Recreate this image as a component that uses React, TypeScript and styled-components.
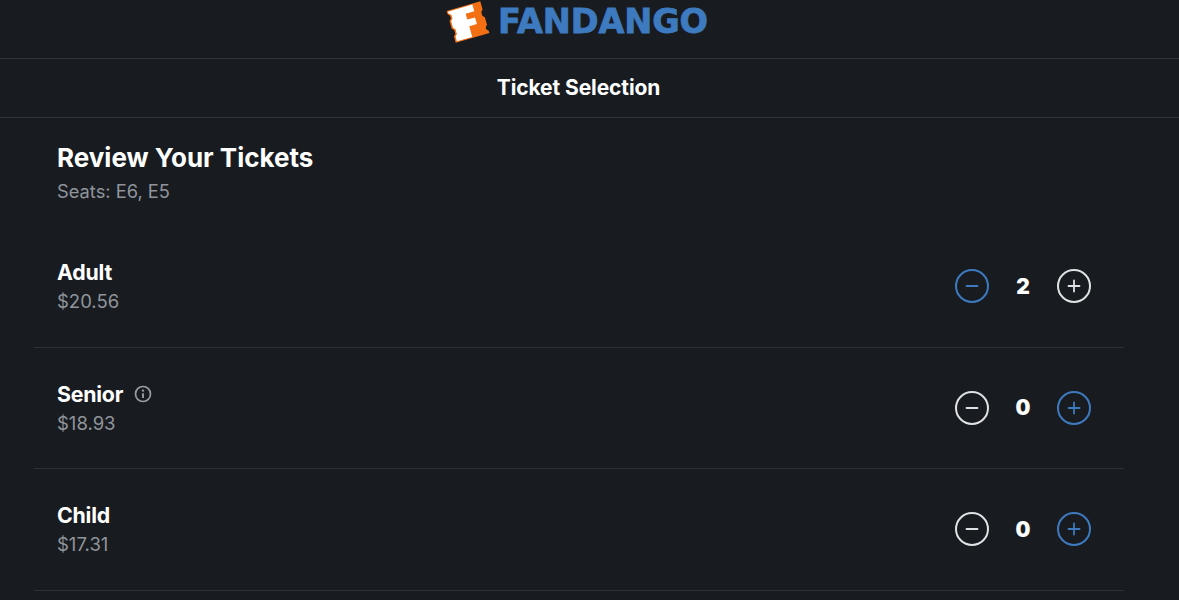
import React from "react";
import styled, { createGlobalStyle } from "styled-components";

const BLUE = "#3d7abf";
const LIGHT = "#dfe1e4";
const MUTED = "#90949a";
const FONT = `Inter, "Noto Sans", "Liberation Sans", sans-serif`;

const Global = createGlobalStyle`
  html, body { margin: 0; padding: 0; background: #181c21; height: 600px; overflow: hidden; }
  * { box-sizing: border-box; }
`;

const Page = styled.div`
  width: 1179px;
  height: 600px;
  overflow: hidden;
  background: #181c21;
  color: #fff;
  font-family: ${FONT};
`;

const LogoBar = styled.header`
  height: 59px;
  border-bottom: 1px solid #31353b;
  display: flex;
  align-items: flex-start;
  justify-content: center;
  gap: 7px;
  padding-right: 26px;
`;

const Wordmark = styled.span`
  font-family: "DejaVu Sans", "Liberation Sans", sans-serif;
  font-weight: 700;
  font-size: 33.5px;
  line-height: 44px;
  letter-spacing: -0.1px;
  color: ${BLUE};
  -webkit-text-stroke: 0.8px ${BLUE};
`;

const TitleBar = styled.div`
  height: 59px;
  border-bottom: 1px solid #31353b;
  display: flex;
  align-items: center;
  justify-content: center;
  padding: 0 22px 2px 0;
  font-size: 21px;
  font-weight: 700;
  letter-spacing: -0.1px;
`;

const Content = styled.main`
  padding: 0 55px 0 34px;
`;

const Intro = styled.section`
  padding: 23px 0 0 23px;
  height: 108px;
`;

const Heading = styled.h1`
  margin: 0;
  font-size: 26px;
  font-weight: 700;
  line-height: 34px;
`;

const Seats = styled.p`
  margin: 0;
  font-size: 18.3px;
  line-height: 32px;
  color: ${MUTED};
`;

const Row = styled.div`
  height: 121.5px;
  border-bottom: 1px solid #2e3238;
  display: flex;
  align-items: center;
  justify-content: space-between;
  padding: 0 33px 0 23px;
`;

const Info = styled.div`
  display: flex;
  flex-direction: column;
  gap: 3px;
  padding-top: 1px;
`;

const NameLine = styled.div`
  display: flex;
  align-items: center;
  gap: 11px;
  font-size: 21.3px;
  font-weight: 700;
  line-height: 26px;
  letter-spacing: -0.2px;
`;

const Price = styled.div`
  font-size: 18.5px;
  line-height: 26px;
  color: ${MUTED};
`;

const Stepper = styled.div`
  display: flex;
  align-items: center;
`;

const RoundButton = styled.button<{ $active: boolean }>`
  width: 34px;
  height: 34px;
  padding: 0;
  border: 2.3px solid ${(p) => (p.$active ? BLUE : LIGHT)};
  border-radius: 50%;
  background: transparent;
  color: ${(p) => (p.$active ? BLUE : LIGHT)};
  display: flex;
  align-items: center;
  justify-content: center;
`;

const Count = styled.span`
  width: 68px;
  text-align: center;
  font-size: 21px;
  font-weight: 900;
`;

const Logo = () => (
  <svg width="46" height="46" viewBox="0 0 46 46" aria-hidden="true">
    <g transform="rotate(-16 23 22)">
      <path
        d="M5.500 5.500 H40.500 V14 L38.500 16 V20 L40.500 22 V30 L38.500 32 V34 L40.500 36 V38.500 H5.500 V32 L7.500 30 V26 L5.500 24 V16 L7.500 14 V11 L5.500 9 Z"
        fill="#f26f14"
      />
      <path
        d="M6.500 6.500 H32 V13.500 H23 V19.500 H31 V26.500 H23 V37.500 H7 V32.500 L9 30.500 V25.500 L7 23.500 V16.500 L9 14.500 V10.500 L6.500 8.500 Z"
        fill="#fff"
      />
    </g>
  </svg>
);

const Minus = () => (
  <svg width="16" height="16" viewBox="0 0 16 16" aria-hidden="true">
    <path d="M2.500 8 H13.500" stroke="currentColor" strokeWidth="1.800" strokeLinecap="round" />
  </svg>
);

const Plus = () => (
  <svg width="16" height="16" viewBox="0 0 16 16" aria-hidden="true">
    <path d="M2.500 8 H13.500 M8 2.500 V13.500" stroke="currentColor" strokeWidth="1.800" strokeLinecap="round" />
  </svg>
);

const InfoIcon = () => (
  <svg width="18" height="18" viewBox="0 0 18 18" aria-hidden="true">
    <circle cx="9" cy="9" r="7.500" fill="none" stroke="#9a9da2" strokeWidth="1.700" />
    <circle cx="9" cy="5.600" r="1.200" fill="#9a9da2" />
    <path d="M9 8.200 V13" stroke="#9a9da2" strokeWidth="1.900" />
  </svg>
);

const tickets = [
  { name: "Adult", price: "$20.56", count: 2, info: false },
  { name: "Senior", price: "$18.93", count: 0, info: true },
  { name: "Child", price: "$17.31", count: 0, info: false },
];

export default function App() {
  return (
    <Page>
      <Global />
      <LogoBar>
        <Logo />
        <Wordmark>FANDANGO</Wordmark>
      </LogoBar>
      <TitleBar>Ticket Selection</TitleBar>
      <Content>
        <Intro>
          <Heading>Review Your Tickets</Heading>
          <Seats>Seats: E6, E5</Seats>
        </Intro>
        {tickets.map((t) => (
          <Row key={t.name}>
            <Info>
              <NameLine>
                {t.name}
                {t.info && <InfoIcon />}
              </NameLine>
              <Price>{t.price}</Price>
            </Info>
            <Stepper>
              <RoundButton $active={t.count > 0}>
                <Minus />
              </RoundButton>
              <Count>{t.count}</Count>
              <RoundButton $active={t.count === 0}>
                <Plus />
              </RoundButton>
            </Stepper>
          </Row>
        ))}
      </Content>
    </Page>
  );
}
